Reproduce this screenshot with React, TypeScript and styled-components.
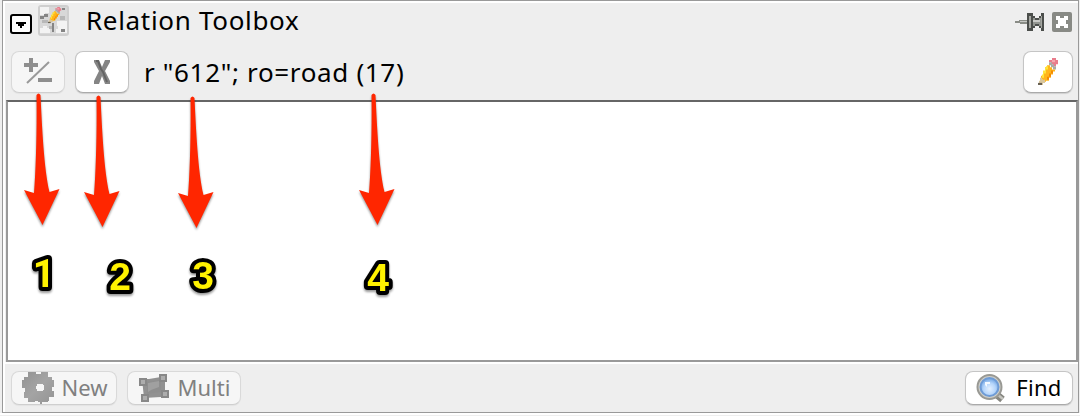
import React from "react";
import styled, { createGlobalStyle, css } from "styled-components";

const Global = createGlobalStyle`
  body { margin: 0; background: #eee; overflow: hidden; }
  * { box-sizing: border-box; }
`;

const Panel = styled.main`
  position: relative;
  width: 1080px;
  height: 416px;
  padding: 0 0 3px 2px;
  background: linear-gradient(#eee 413px, #fff 413px 415px, #eee 415px);
  font-family: "Noto Sans", sans-serif;
  color: #000;
`;

const Frame = styled.section`
  display: flex;
  flex-direction: column;
  width: 1077px;
  height: 413px;
  border: 1px solid #999;
  background: #eee;
  box-shadow: inset 2px 2px #fff;
`;

const TitleBar = styled.header`
  display: flex;
  align-items: center;
  height: 46px;
  padding: 0 6px 4px 7px;
`;

const Title = styled.h1`
  flex: 1;
  margin: -4px 0 0 16px;
  font-size: 26px;
  font-weight: 400;
  line-height: 40px;
  letter-spacing: 0.68px;
`;

const Toolbar = styled.div`
  display: flex;
  align-items: center;
  height: 53px;
  padding: 0 5px 4px 8px;
`;

const Query = styled.span`
  flex: 1;
  margin-left: 15px;
  font-size: 26px;
  line-height: 40px;
  letter-spacing: 0.66px;
  white-space: pre;
`;

const Button = styled.button<{ $w: number; $h: number; $muted?: boolean }>`
  display: flex;
  align-items: center;
  justify-content: center;
  width: ${(p) => p.$w}px;
  height: ${(p) => p.$h}px;
  padding: 0;
  border: 1px solid #c5c5c5;
  border-bottom-color: #aaa;
  border-radius: 8px;
  background: #fff;
  box-shadow: 0 1px 1px #0002;
  color: #000;
  font: 22px/30px "Noto Sans", sans-serif;
  ${(p) =>
    p.$muted &&
    css`
      border-color: #d9d9d9;
      border-bottom-color: #cfcfcf;
      background: #f6f6f6;
      box-shadow: 0 1px 1px #0000000c;
      color: #808080;
    `}
`;

const Label = styled.span<{ $gap: number; $track?: number }>`
  margin: -2px 0 0 ${(p) => p.$gap}px;
  letter-spacing: ${(p) => p.$track ?? 0}px;
`;

const List = styled.div`
  flex: none;
  width: 1072px;
  height: 262px;
  margin-left: 3px;
  border: 2px solid #999;
  border-top-color: #666;
  background: #fff;
`;

const Footer = styled.footer`
  display: flex;
  flex: 1;
  align-items: flex-start;
  gap: 10px;
  margin-left: 2px;
  padding: 9px 5px 0 6px;
  box-shadow: inset 0 2px #fff;
`;

const Spacer = styled.span`
  flex: 1;
`;

const Gap = styled.span<{ $w: number }>`
  width: ${(p) => p.$w}px;
`;

const Marker = styled.span<{ $x: number; $y: number }>`
  position: absolute;
  left: ${(p) => p.$x}px;
  top: ${(p) => p.$y}px;
  width: 40px;
  height: 140px;
  filter: drop-shadow(0 2px 1px #0006);
`;

const Callout = styled.svg<{ $x: number; $y: number }>`
  position: absolute;
  left: ${(p) => p.$x}px;
  top: ${(p) => p.$y}px;
  filter: drop-shadow(0 2px 1px #0006);
`;

const Digit = styled.text<{ $family: string }>`
  font: 700 39px ${(p) => p.$family}, sans-serif;
  text-anchor: middle;
  fill: #fff200;
  stroke: #000;
  stroke-width: 8px;
  stroke-linejoin: round;
  paint-order: stroke fill;
`;

const Icon = styled.svg`
  display: block;
  flex: none;
`;

const Collapse = () => (
  <Icon width="22" height="24" viewBox="0 -4 22 24">
    <rect x="1" y="1" width="20" height="18" rx="2" fill="#fff" stroke="#000" strokeWidth="2" />
    <path d="M6 8h10v2h-2v2h-2v2h-2v-2H8v-2H6z" fill="#000" />
  </Icon>
);

const pencil = (
  <g>
    <path d="M14 0h4v2h2v4h-2v2h-3V6h-2V4h-2V2h3z" fill="#e97c8b" />
    <path d="M14 2h3v2h-3z" fill="#f4a9b1" />
    <path d="M11 4h3v2h2v2h2v3h-3V9h-2V7h-2z" fill="#a9aaa5" />
    <path d="M9 7h3v2h2v2h3v2h-2v3h-2v3h-2v3H8v1H5v-2H3v-4h2v-4h2v-4h2z" fill="#ffb51a" />
    <path d="M8 8h2v3H8v4H6v4H4v-3h1v-4h2V9h1z" fill="#ffe43b" />
    <path d="M13 12h2v3h-2v3h-2v3H9v-3h2v-3h2z" fill="#f58a00" />
    <path d="M2 19h2v2h3v3H5v2H1v-4h1z" fill="#d9c69d" />
    <path d="M0 24h4v2H0z" fill="#665e50" />
  </g>
);

const PencilIcon = () => (
  <Icon width="21" height="28" viewBox="0 0 21 27" preserveAspectRatio="none">{pencil}</Icon>
);

const RelationIcon = () => (
  <Icon width="32" height="36" viewBox="0 0 32 36">
    <rect y="1" width="31" height="31" rx="3" fill="#cfcfcf" />
    <rect x="2" y="3" width="27" height="27" fill="#d8d8d8" />
    <path d="M2 3h9v6H7v2H2zM19 17h10v5H19zM5 22h4v2h3v5H2v-5h3zM20 22h4v-2h5v9H18v-4h2z" fill="#f3f3f3" />
    <path d="M2 12h4v-2h4v3H6v2H2zM14 19h2v9h-2zM24 4h3v2h-3zM23 25h4v3h-4z" fill="#858585" />
    <path d="M22 12h5v4h-5zM4 16h6v3H4zM11 22h3v3h-3z" fill="#b8b8b8" />
    <g transform="translate(10 3) scale(.66 .62)">{pencil}</g>
  </Icon>
);

const PinIcon = () => (
  <Icon width="30" height="20" viewBox="0 0 30 20">
    <path d="M0 9h4V8h9v4H5v-1H0z" fill="#898c86" />
    <path d="M5 9h8v1H5z" fill="#c5c7c3" />
    <path d="M12 1h6v3h2v2h4V4h2V1h3v18h-3v-3h-2v-2h-4v2h-2v3h-6z" fill="#4b4e4b" />
    <path d="M14 4h2v12h-2zM26 4h1v12h-1z" fill="#a4a6a1" />
    <path d="M18 6h2v2h4V6h2v8h-2v-2h-4v2h-2z" fill="#929590" />
    <path d="M18 8h7v2h-7z" fill="#c9cac7" />
  </Icon>
);

const CloseIcon = () => (
  <Icon width="20" height="24" viewBox="0 -2 20 24">
    <rect width="20" height="20" rx="2" fill="#888a85" />
    <path d="M4 4h4v2h4V4h4v4h-2v4h2v4h-4v-2H8v2H4v-4h2V8H4z" fill="#fff" />
  </Icon>
);

const PlusMinusIcon = () => (
  <Icon width="28" height="28" viewBox="0 0 28 28">
    <path d="M5 0h4v5h5v4H9v5H5V9H0V5h5zM14 20h14v4H14z" fill="#8e8e8e" />
    <path d="M3 25L25 4" stroke="#999" strokeWidth="2" />
  </Icon>
);

const CrossIcon = () => (
  <Icon width="18" height="24" viewBox="0 0 18 24">
    <path d="M1 0h5l3 7 3-7h5v2l-5 9 5 10v3h-5l-3-8-3 8H1v-3l5-10L1 2z" fill="#858585" />
    <path d="M3 1h2l3 8 2 3 4 10" fill="none" stroke="#646464" strokeWidth="2" />
  </Icon>
);

const GearIcon = () => (
  <Icon width="32" height="34" viewBox="0 0 32 34">
    <defs>
      <linearGradient id="gear" x2="1" y2="1">
        <stop stopColor="#929292" />
        <stop offset=".5" stopColor="#a4a4a4" />
        <stop offset="1" stopColor="#949494" />
      </linearGradient>
    </defs>
    <path
      d="M6 1h8v2h5V1h7v5h4v3h2v7h-2v4h2v6h-5v4h-1v1h-6v2h-2v-2h-2v-1h-3v1H6v-4H2v-6h1v-4H0V9h2V6h4z"
      fill="url(#gear)"
    />
    <path d="M15 13h6v1h1v5h-1v1h-6v-2h-1v-3h1z" fill="#f6f6f6" />
  </Icon>
);

const MultiIcon = () => (
  <Icon width="30" height="28" viewBox="0 0 30 28">
    <path d="M3 5h7l12-2 4 3v15l-4 2-17 1z" fill="#919191" />
    <path d="M8 8l14-2v12L8 20z" fill="#8e8e8e" />
    <path d="M9 9l11-2v6l-8 3-3 2z" fill="#a0a0a0" />
    {[[1, 5], [21, 1], [23, 17], [3, 21]].map(([x, y]) => (
      <rect key={x} x={x} y={y} width="6" height="6" fill="#adadad" stroke="#888" strokeWidth="2" />
    ))}
  </Icon>
);

const FindIcon = () => (
  <Icon width="30" height="29" viewBox="0 0 30 29">
    <defs>
      <radialGradient id="lens" cx=".5" cy=".6" r=".55">
        <stop stopColor="#e4f0ff" />
        <stop offset=".6" stopColor="#b5d5fb" />
        <stop offset="1" stopColor="#78a9e4" />
      </radialGradient>
    </defs>
    <path d="M20 20l6.500 5.500" stroke="#85857f" strokeWidth="7" />
    <path d="M22 21l5 4" stroke="#c5c5bf" strokeWidth="2.500" />
    <circle cx="13.5" cy="13" r="12" fill="#cfcfc9" stroke="#999994" strokeWidth="2" />
    <circle cx="13.5" cy="13" r="9" fill="url(#lens)" stroke="#6e9bd6" strokeWidth="2" />
    <path d="M9 11V8h5v2h-3v3z" fill="#f4f9ff" />
  </Icon>
);

const arrows = [
  { x: 22, y: 93 },
  { x: 82, y: 94.5 },
  { x: 176, y: 96 },
  { x: 357, y: 93 },
];

const arial = '"Liberation Sans"';
const digits = [
  { x: 14, y: 246.5, family: "Roboto" },
  { x: 90, y: 250, family: arial },
  { x: 173, y: 249, family: arial },
  { x: 347.5, y: 251, family: arial },
];

export default function App() {
  return (
    <Panel>
      <Global />
      <Frame>
        <TitleBar>
          <Collapse />
          <Gap $w={6} />
          <RelationIcon />
          <Title>Relation Toolbox</Title>
          <PinIcon />
          <Gap $w={7} />
          <CloseIcon />
        </TitleBar>
        <Toolbar>
          <Button $w={54} $h={42} $muted><PlusMinusIcon /></Button>
          <Gap $w={10} />
          <Button $w={54} $h={42}><CrossIcon /></Button>
          <Query>r "612"; ro=road (17)</Query>
          <Button $w={50} $h={42}><PencilIcon /></Button>
        </Toolbar>
        <List />
        <Footer>
          <Button $w={106} $h={34} $muted><Gap $w={1} /><GearIcon /><Label $gap={8}>New</Label></Button>
          <Button $w={114} $h={34} $muted><Gap $w={1} /><MultiIcon /><Label $gap={9}>Multi</Label></Button>
          <Spacer />
          <Button $w={108} $h={34}><FindIcon /><Label $gap={10} $track={0.3}>Find</Label></Button>
        </Footer>
      </Frame>
      {arrows.map((a) => (
        <Marker key={a.x} $x={a.x} $y={a.y}>
          <Icon width="40" height="140" viewBox="0 0 40 140">
            <path d="M14.500 2Q16.500-1 18.500 2C20 34 22 76 27.500 99L37.500 96L20.500 132L2 97L12 100C14 76 15 34 14.500 2Z" fill="#ff2600" />
          </Icon>
        </Marker>
      ))}
      {digits.map((d, i) => (
        <Callout key={d.x} $x={d.x} $y={d.y} width="60" height="56">
          <Digit x="30" y="40" $family={d.family}>{i + 1}</Digit>
        </Callout>
      ))}
    </Panel>
  );
}
